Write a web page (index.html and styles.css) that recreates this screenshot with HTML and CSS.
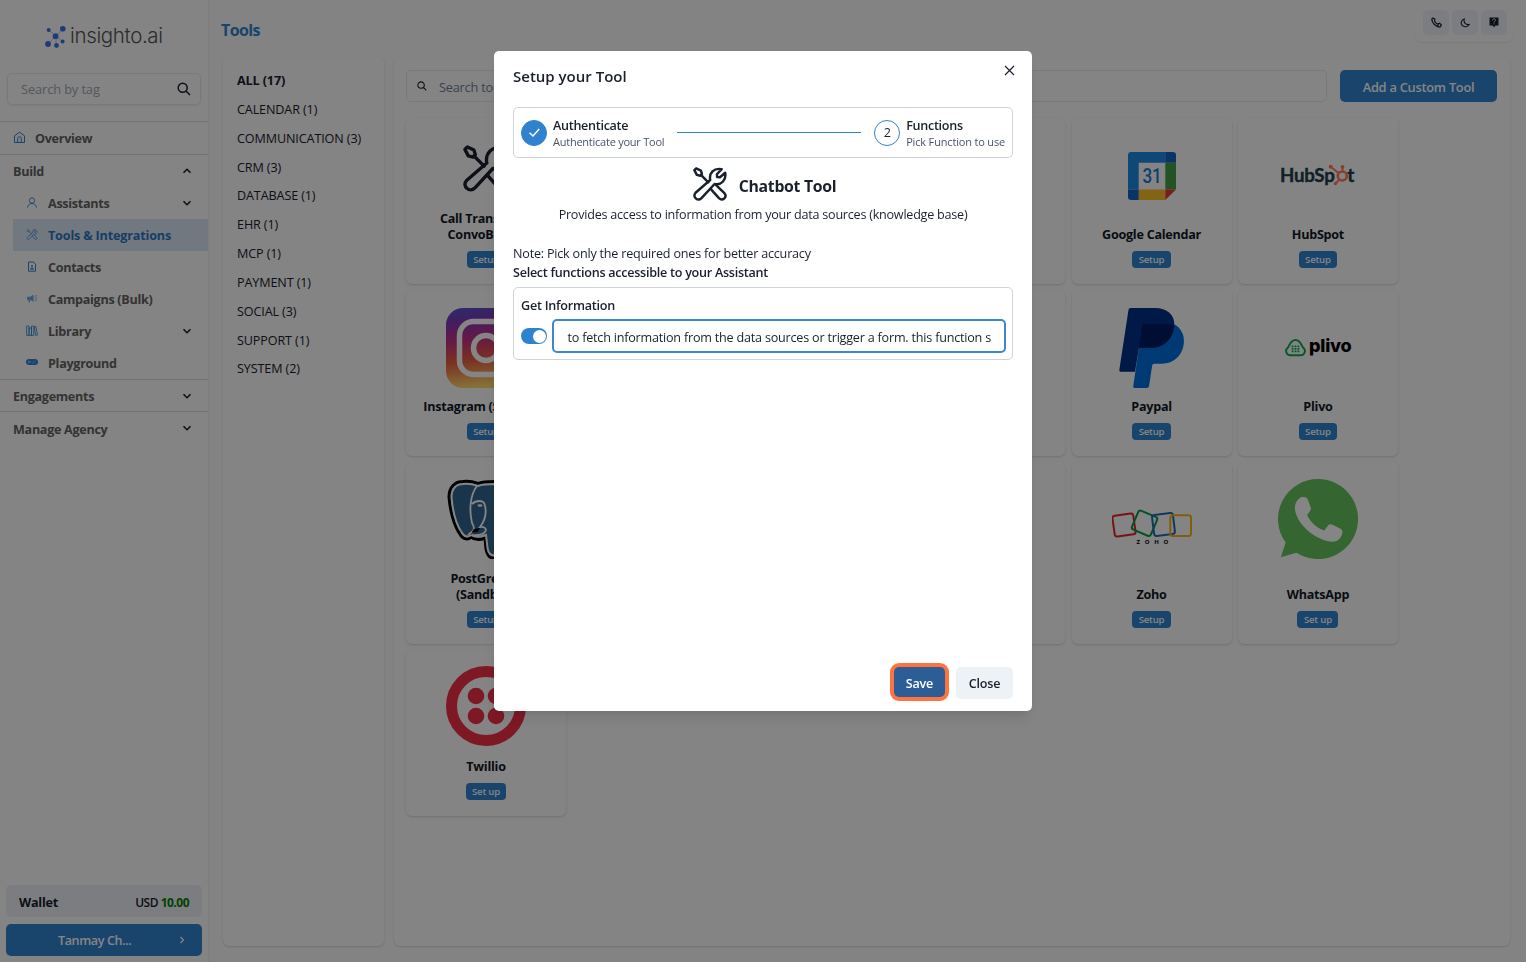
FILE: index.html
```html
<!DOCTYPE html>
<html lang="en">
<head>
<meta charset="utf-8">
<title>Tools</title>
<link rel="stylesheet" href="styles.css">
</head>
<body>
<svg class="defs" width="0" height="0">
  <symbol id="tools" viewBox="0 0 32 32"><g fill="none" stroke="currentColor" stroke-width="2.3" stroke-linejoin="round" stroke-linecap="round"><path d="M1.3 3 3 1.3 7.4 3.4 8.4 6.5 6.8 8.2 3.6 7.4Z"/><path d="M7.5 7.5 14.4 14.4"/><path d="M16.2 12.2C15 5.8 19.5 .6 27 2L22.5 6.8 22.7 9.5 25.4 9.6 30.3 5.4C31.5 12.5 26.5 17.4 20.3 16L8 29.3C4.5 32.8-1 28 2.4 24.2L16.2 12.2"/><path d="M17 21 24.4 29.3C28 32.7 32.8 28 29.3 24.4L22 17.3"/></g></symbol>
  <symbol id="down" viewBox="0 0 10 10"><path d="M1.5 3.2 5 6.7 8.5 3.2" fill="none" stroke="currentColor" stroke-width="1.6"/></symbol>
  <symbol id="up" viewBox="0 0 10 10"><path d="M1.5 6.8 5 3.3 8.5 6.8" fill="none" stroke="currentColor" stroke-width="1.6"/></symbol>
  <symbol id="search" viewBox="0 0 14 14"><path d="M9 9 13 13M5.700 1.200a4.500 4.500 0 1 0 0 9 4.500 4.500 0 0 0 0-9Z" fill="none" stroke="currentColor" stroke-width="1.5"/></symbol>
</svg>
<div class="app">
  <aside class="sidebar">
    <div class="logo">
      <svg width="22" height="24" viewBox="0 0 22 24"><path d="M3.5 5 11 11 18 3.500M11 11 3.500 18.500M11 11V20.500M11 11 17.500 16.500" fill="none" stroke="#9bb5ee" stroke-width=".8"/><g fill="#3b6fe8"><circle cx="3.700" cy="5" r="2"/><circle cx="17.800" cy="3.800" r="2.800"/><circle cx="10.600" cy="11.200" r="2.900"/><circle cx="3" cy="19" r="2.900"/><circle cx="11.500" cy="20.500" r="2.400"/><circle cx="17.600" cy="16.500" r="2"/></g></svg>
      <span>insighto.ai</span>
    </div>
    <div class="tag-search"><span>Search by tag</span><svg width="14" height="14"><use href="#search"/></svg></div>
    <nav>
      <a class="item top"><svg width="13" height="13" viewBox="0 0 13 13"><path d="M1.500 11.500V4.800L6.500 1.200 11.500 4.800V11.500ZM4.700 11.500V7.500a1.800 1.800 0 0 1 3.600 0V11.500" fill="none" stroke="currentColor"/></svg><b>Overview</b></a>
      <div class="item group"><b>Build</b><svg class="chev" width="10" height="10"><use href="#up"/></svg></div>
      <div class="subs">
        <a class="item sub"><svg width="12" height="12" viewBox="0 0 12 12"><g fill="none" stroke="currentColor" stroke-width=".9"><circle cx="6" cy="3.500" r="2.700"/><path d="M1.500 10.500C2 8 3.500 6.500 6 6.500s4 1.500 4.500 4"/></g></svg><b>Assistants</b><svg class="chev" width="10" height="10"><use href="#down"/></svg></a>
        <a class="item sub active"><svg width="12" height="12" viewBox="0 0 12 12"><use href="#tools" x=".5" y="0" width="11" height="11" opacity=".8"/></svg><b>Tools &amp; Integrations</b></a>
        <a class="item sub"><svg width="12" height="12" viewBox="0 0 12 12"><path d="M2.500 1H7.500L9.500 3.200V10.200H2.500Z" fill="none" stroke="currentColor"/><circle cx="6" cy="5.100" r="1" fill="currentColor"/><path d="M4 8.500c0-2.500 4-2.500 4 0Z" fill="currentColor"/></svg><b>Contacts</b></a>
        <a class="item sub"><svg width="12" height="12" viewBox="0 0 12 12"><path d="M1 3.700H4L7.500 1.700V8.700L4 6.700V9.200H2.500V6.700H1Z" fill="currentColor" opacity=".7"/><path d="M9 3.700 10.500 2.200M9.500 5.200H11M9 6.700 10.500 8.200" stroke="currentColor" stroke-width=".8"/></svg><b>Campaigns (Bulk)</b></a>
        <a class="item sub"><svg width="12" height="12" viewBox="0 0 12 12"><path d="M.6 1H3V10.400H.6ZM3 3H5.500V10.400H3ZM5.500 1H7.700V10.400H5.500ZM8.300 1.700 9.800 1.200 11.500 10 9.500 10.400Z" fill="none" stroke="currentColor" stroke-width=".8"/></svg><b>Library</b><svg class="chev" width="10" height="10"><use href="#down"/></svg></a>
        <a class="item sub"><svg width="12" height="12" viewBox="0 0 12 12"><rect y="2" width="12" height="6" rx="3" fill="currentColor"/><circle cx="3.200" cy="5" r="1.300" fill="#91bce4"/><path d="M6.500 6.500 9 3.500" stroke="#91bce4"/></svg><b>Playground</b></a>
      </div>
      <div class="item group line"><b>Engagements</b><svg class="chev" width="10" height="10"><use href="#down"/></svg></div>
      <div class="item group line last"><b>Manage Agency</b><svg class="chev" width="10" height="10"><use href="#down"/></svg></div>
    </nav>
    <div class="wallet"><b>Wallet</b><span>USD <b>10.00</b></span></div>
    <div class="account"><span>Tanmay Ch...</span><svg width="8" height="8" viewBox="0 0 8 8"><path d="M2.500 1 5.500 4 2.500 7" fill="none" stroke="currentColor" stroke-width="1.200"/></svg></div>
  </aside>
  <div class="page">
    <header>
      <h1>Tools</h1>
      <div class="actions">
        <span><svg width="11" height="11" viewBox="0 0 12 12"><path d="M2 1 4.300 2.300 3.800 4.300C4.500 5.900 5.600 7.200 7.200 7.800L9.500 6.800 11.300 9 9.700 11C5.500 10.800 1 6.500.8 2.300ZM8 8.200 7.500 10" fill="none" stroke="currentColor" stroke-width="1.300"/></svg></span>
        <span><svg width="10" height="10" viewBox="0 0 10 10"><path d="M4.300 1C1.500 1.800.3 5 2 7.200S7.500 9.500 9.200 6.500C6 7.300 3.200 4.500 4.300 1Z" fill="none" stroke="currentColor" stroke-width="1.100"/></svg></span>
        <span><svg width="10" height="11" viewBox="0 0 10 11"><path d="M.5.500h9v8H6.500L5 10.200 3.500 8.500h-3Z" fill="currentColor"/><path d="M3.500 3.400C3.500 1.300 6.700 1.500 6.500 3.400 6.400 4.300 5 4.400 5 5.500M5 6.400V7.400" fill="none" stroke="#e8ecf4" stroke-width=".9"/></svg></span>
      </div>
    </header>
    <div class="columns">
      <ul class="categories">
        <li class="all">ALL (17)</li><li>CALENDAR (1)</li><li>COMMUNICATION (3)</li><li>CRM (3)</li><li>DATABASE (1)</li><li>EHR (1)</li><li>MCP (1)</li><li>PAYMENT (1)</li><li>SOCIAL (3)</li><li>SUPPORT (1)</li><li>SYSTEM (2)</li>
      </ul>
      <main>
        <div class="bar">
          <div class="tool-search"><svg width="10" height="10"><use href="#search"/></svg><span>Search tools</span></div>
          <div class="add">Add a Custom Tool</div>
        </div>
        <div class="grid">
          <div class="card call"><svg width="47" height="47"><use href="#tools"/></svg><div class="name">Call Transfer to<br>ConvoBridge</div><i>Setup</i></div>
          <div class="card"></div><div class="card"></div><div class="card"></div>
          <div class="card"><svg width="80" height="80" viewBox="0 0 80 80"><path d="M19 16H53.500V26.700H26.700V53.500H16V19Q16 16 19 16Z" fill="#1e88e5"/><path d="M53.300 16H61Q64 16 64 19V26.700H53.300Z" fill="#1565c0"/><path d="M53.300 26.700H64V53.500H53.300Z" fill="#43a047"/><path d="M26.700 53.500H53.300V64H26.700Z" fill="#fbc02d"/><path d="M16 53.500H26.700V64H19Q16 64 16 61Z" fill="#1565c0"/><path d="M53.300 53.500H64L53.300 64Z" fill="#e53935"/><text x="40" y="47" text-anchor="middle" font-family="Roboto" font-size="20" font-weight="500" textLength="19" lengthAdjust="spacingAndGlyphs" fill="#1e7ad6">31</text></svg><div class="name">Google Calendar</div><i>Setup</i></div>
          <div class="card"><svg width="80" height="80" viewBox="0 0 80 80"><g font-family="Lato" font-weight="700" font-size="19" fill="#213d4c" stroke="#213d4c" stroke-width=".4"><text x="2" y="45.800" textLength="54.500" lengthAdjust="spacingAndGlyphs">HubSp</text><text x="69.300" y="45.800">t</text></g><g fill="none" stroke="#ff7a59" stroke-width="1.800"><circle cx="64.300" cy="40" r="4.500" stroke-width="2.600"/><path d="M64.500 35V31M60.500 37 53 31M61 44 57.500 47.500"/></g><g fill="#ff7a59"><circle cx="52.700" cy="30.700" r="2"/><circle cx="64.500" cy="31" r="1.900"/><circle cx="57.500" cy="47.500" r="1.700"/></g></svg><div class="name">HubSpot</div><i>Setup</i></div>

          <div class="card"><svg width="80" height="80" viewBox="0 0 80 80"><defs><linearGradient id="ig" x2=".12" y2="1"><stop stop-color="#4e57cf"/><stop offset=".18" stop-color="#7f38bb"/><stop offset=".43" stop-color="#c82f84"/><stop offset=".68" stop-color="#e85f40"/><stop offset="1" stop-color="#ffd66c"/></linearGradient></defs><rect width="80" height="80" rx="17" fill="url(#ig)"/><g fill="none" stroke="#fff" stroke-width="5.500"><rect x="13.500" y="13.500" width="53" height="53" rx="14"/><circle cx="40" cy="40" r="12.500"/></g></svg><div class="name">Instagram (Sandbox)</div><i>Setup</i></div>
          <div class="card"></div><div class="card"></div><div class="card"></div>
          <div class="card"><svg width="80" height="80" viewBox="0 0 80 80"><path d="M27 39.700 30.300 18Q30.700 16.300 32.500 16.300H62.300C69 20 72.500 27 71.900 34.500 71 47 62 55.700 50 55.700H42Q40.500 55.700 40.200 57.200L37 78.200Q36.700 80 35 80H22.500Q21 80 21.200 78.200Z" fill="#0070e0"/><path d="M16.500 1.800Q16.800 0 18.500 0H43C55 0 63 7 62.300 17.500 61.500 30 52 39.700 40 39.700H27L23 63.700H8.700Q7 63.700 7.300 62Z" fill="#003087"/><path d="M27 39.700 30.300 18Q30.700 16.300 32.500 16.300H55Q60 16.300 62.300 17.700C61.500 30 52 39.700 40 39.700Z" fill="#001c64"/></svg><div class="name">Paypal</div><i>Setup</i></div>
          <div class="card"><svg width="80" height="80" viewBox="0 0 80 80"><path d="M12.500 47.300H22.500C27 47.300 28.500 42 25 39.500 23.500 37.500 22.500 32 17.500 32S11.500 37.500 10 39.500C6.500 42 8 47.300 12.500 47.300Z" fill="none" stroke="#0fa84f" stroke-width="1.900"/><path d="M14.600 37.500V44.500M17.500 37.500V44.500M20.400 37.500V44.500" stroke="#0fa84f" stroke-width="1.900" stroke-dasharray="1.700 .8"/><text x="31" y="44.200" font-family="Inter" font-weight="800" font-size="18" textLength="42.500" lengthAdjust="spacingAndGlyphs">plivo</text></svg><div class="name">Plivo</div><i>Setup</i></div>

          <div class="card r3"><svg width="80" height="80" viewBox="0 0 80 80"><path d="M3 18C3 8 9 2.500 17 2.500 23 1.500 28 3 32 4.500 36 2.500 42 2.500 50 2.500L65 4 77 15 65 60 55 79H49C43 80 41 75 40 70L39 59C34 61 28 61 25 58 23 61 17 61 14 55 8 47 4 31 3 18Z" fill="#336791" stroke="#000" stroke-width="3"/><path d="M5.500 18C5.500 10 10 5 17 5 23 4 28 5.500 32 7 36 5 42 5 50 5L65 6M25 56C22 58.500 18 58 15.500 53 10 45 6.500 30 5.500 18M25 56C29 58.500 35 58 40 56L41.500 69C42.500 76 46 77 50 76.500" fill="none" stroke="#fff" stroke-width="2"/><path d="M31 7C24 16 23 31 26 44 28 47 29 49 27 52L22 56M26 25C30 21 37 21 38.500 25 42 36 37 44 34 48 39 47 42 51 38 54 34 57 28 56 26 56" fill="none" stroke="#fff" stroke-width="1.800"/><path d="M28 50 34 49 31.500 53 25.500 53.500Z"/><ellipse cx="34" cy="26.500" rx="2.500" ry="1.300" fill="#fff"/></svg><div class="name">PostGreSQL<br>(Sandbox)</div><i>Setup</i></div>
          <div class="card"></div><div class="card"></div><div class="card"></div>
          <div class="card r3"><svg width="80" height="80" viewBox="0 0 80 80"><g fill="none" stroke-width="2"><rect x="1.500" y="35.500" width="21" height="21" rx="2.500" transform="rotate(-8 12 46)" stroke="#e42527"/><rect x="22.300" y="34" width="20.500" height="20.500" rx="2.500" transform="rotate(23 32.500 44.300)" stroke="#089949"/><rect x="41" y="35" width="21" height="21" rx="2.500" transform="rotate(-7 51.500 45.500)" stroke="#226db4"/><rect x="58.300" y="36.200" width="20.700" height="20.700" rx="2.500" stroke="#f9b21d"/></g><text x="24.500" y="65.200" font-family="Open Sans" font-weight="700" font-size="6" textLength="31.500">ZOHO</text></svg><div class="name">Zoho</div><i>Setup</i></div>
          <div class="card r3"><svg width="80" height="80" viewBox="0 0 80 80"><path d="M40 0A40 40 0 1 1 18.500 73.700L2.800 78.300 7.700 63.600A40 40 0 0 1 40 0Z" fill="#67c15e"/><path d="M17 30C16.500 24 20 19 24 18 28 17.500 29 18.500 30 21L33 29.300C33 31.500 31 33.500 29 36C33 44 39 49 46.300 51.500L50.500 46Q52 44.500 54.500 45.700L62.500 49.700Q65 51 64.300 54C63 60 59 63 53.700 62.700 36 61 18 44 17 30Z" fill="#fff"/></svg><div class="name">WhatsApp</div><i>Set up</i></div>

          <div class="card r4"><svg width="80" height="80" viewBox="-40 -40 80 80"><circle r="34.500" fill="none" stroke="#f22f46" stroke-width="11"/><g fill="#f22f46"><circle cx="-10" cy="-10" r="8.300"/><circle cx="10" cy="-10" r="8.300"/><circle cx="-10" cy="10" r="8.300"/><circle cx="10" cy="10" r="8.300"/></g></svg><div class="name">Twillio</div><i>Set up</i></div>
        </div>
      </main>
    </div>
  </div>
</div>
<div class="overlay">
  <section class="modal">
    <div class="title"><h2>Setup your Tool</h2><svg width="11" height="11" viewBox="0 0 11 11"><path d="M1 1 10 10M10 1 1 10" stroke="currentColor" stroke-width="1.200"/></svg></div>
    <div class="stepper">
      <div class="dot done"><svg width="13" height="13" viewBox="0 0 13 13"><path d="M1.500 6.800 5 10 11.200 3" fill="none" stroke="#fff" stroke-width="1.500"/></svg></div>
      <div class="step"><b>Authenticate</b><span class="s1">Authenticate your Tool</span></div>
      <div class="rule"></div>
      <div class="dot">2</div>
      <div class="step"><b>Functions</b><span class="s2">Pick Function to use</span></div>
    </div>
    <div class="tool-head"><svg width="34" height="34"><use href="#tools"/></svg><h3>Chatbot Tool</h3></div>
    <p class="desc">Provides access to information from your data sources (knowledge base)</p>
    <p class="note">Note: Pick only the required ones for better accuracy</p>
    <p class="select">Select functions accessible to your Assistant</p>
    <div class="function">
      <b>Get Information</b>
      <div class="row"><span class="switch"></span><div class="field"><span>to fetch information from the data sources or trigger a form. this function s</span></div></div>
    </div>
    <footer><span class="save">Save</span><span class="close">Close</span></footer>
  </section>
</div>
</body>
</html>
```
FILE: styles.css
```css
* { box-sizing: border-box; }
body { margin: 0; background: #fff; color: #1a202c; font: 12.6px/19px "Open Sans", "Noto Sans", sans-serif; letter-spacing: -.24px; overflow: hidden; }
svg { display: block; flex: none; }
.defs { position: absolute; }
b { font-weight: 600; }
h1, h2, h3, p, ul { margin: 0; padding: 0; }
.app { display: flex; height: 962px; background: #fcfcfc; }

.sidebar { width: 209px; border-right: 1px solid #f0f0f2; display: flex; flex-direction: column; background: #fdfdfd; box-shadow: 0 0 3px rgba(0,0,0,.06); }
.logo { display: flex; height: 73px; padding: 0 0 0 45px; align-items: center; gap: 3px; font: 300 20.5px/24px Inter, sans-serif; color: #555; letter-spacing: -.35px; }
.logo span { margin-top: -2px; }
.tag-search { margin: 0 7px; height: 32px; flex: none; border: 1px solid #e2e8f0; border-radius: 5px; display: flex; align-items: center; justify-content: space-between; padding: 0 9px 0 13px; box-shadow: 0 1px 2px rgba(0,0,0,.05); color: #1a202c; }
.tag-search span { color: #a0a8b5; font-size: 12.8px; letter-spacing: -.1px; padding-top: 1px; }
nav { margin-top: 16px; flex: 1; color: #636363; }
.item { height: 32px; display: flex; align-items: center; }
.item b { font-weight: 700; letter-spacing: -.3px; }
.item > svg:first-child { color: #3182ce; }
.top { height: 34px; border-top: 1px solid #e0e0e3; border-bottom: 1px solid #dcdcdf; padding-left: 13px; gap: 9px; }
.top svg { margin-top: -1px; }
.group { padding-left: 13px; }
.line { border-top: 1px solid #dcdcdf; height: 32px; }
.line b { padding-top: 1px; }
.last b { padding-top: 3px; }
.sub { margin-left: 13px; padding-left: 13px; gap: 10px; }
.item .chev { color: #1a202c; margin-left: auto; margin-right: 16px; }
.sub.active { background: #dbe7f5; }
.sub.active b { color: #2b77c0; letter-spacing: -.17px; }
.wallet, .account { height: 32px; margin: 0 6px 7px; border-radius: 5px; display: flex; align-items: center; justify-content: space-between; padding: 0 13px; flex: none; }
.wallet { background: #edf0f8; padding-top: 2px; }
.wallet > b { font-weight: 700; }
.wallet span { font-size: 12px; font-weight: 600; letter-spacing: -.5px; }
.wallet span b { color: green; font-weight: 700; }
.account { background: #3182ce; color: #fff; font-weight: 600; padding: 0 16px 0 52px; margin-bottom: 6px; letter-spacing: -.4px; }

.page { flex: 1; min-width: 0; }
header { height: 57px; display: flex; justify-content: space-between; padding: 0 13px 0 12px; }
h1 { font-size: 16px; line-height: 60px; color: #3182ce; font-weight: 700; letter-spacing: -.6px; }
.actions { height: 42px; padding: 10px 6px 7px 8px; display: flex; gap: 3px; border-radius: 0 0 6px 6px; box-shadow: 0 1px 2px rgba(0,0,0,.08); }
.actions span { width: 26px; height: 25px; background: #edf0f6; border-radius: 5px; display: grid; place-items: center; }
.columns { display: flex; gap: 10px; padding: 0 16px 0 14px; }
.categories, main { height: 889px; border-radius: 6px; background: #fdfdfd; box-shadow: 0 1px 3px rgba(0,0,0,.1), 0 1px 2px rgba(0,0,0,.06); }
.categories { width: 161px; padding: 10px 0 0 14px; list-style: none; }
.categories li { height: 28.85px; line-height: 28.85px; white-space: nowrap; letter-spacing: -.12px; }
.categories .all { font-weight: 700; }
main { flex: 1; padding: 13px 13px 0 12px; }
.bar { display: flex; gap: 13px; }
.tool-search { flex: 1; height: 32px; border: 1px solid #e2e8f0; border-radius: 5px; display: flex; align-items: center; gap: 12px; padding-left: 10px; }
.tool-search span { color: #718096; font-size: 12.8px; padding-top: 2px; }
.add { width: 157px; height: 32px; border-radius: 5px; background: #3182ce; color: #fff; font-weight: 600; text-align: center; line-height: 35px; font-size: 12.8px; }
.grid { margin-top: 16px; display: grid; grid-template-columns: repeat(6, 160px); grid-template-rows: 166px 166px 182px 166px; gap: 6px 6.4px; }
.card { border-radius: 6px; background: #fefefe; box-shadow: 0 1px 3px rgba(0,0,0,.1), 0 1px 2px rgba(0,0,0,.06); padding: 18px 0 16px; display: flex; flex-direction: column; align-items: center; }
.call { padding-top: 27px; }
.r3 { padding-top: 17px; }
.r4 { padding-top: 16px; }
.name { margin-top: auto; text-align: center; font-weight: 700; line-height: 16px; color: #111827; letter-spacing: -.26px; white-space: nowrap; }
.card i { margin-top: 8px; font: 600 9.6px/17px "Open Sans", sans-serif; letter-spacing: -.2px; height: 17px; border-radius: 4px; padding: 0 6.5px; background: #3182ce; color: #fff; }

.overlay { position: fixed; inset: 0; background: rgba(0,0,0,.48); padding-top: 51px; }
.modal { width: 538px; height: 660px; margin: 0 auto; background: #fff; border-radius: 5px; box-shadow: 0 10px 15px -3px rgba(0,0,0,.1), 0 4px 6px -2px rgba(0,0,0,.05); padding: 0 19px; display: flex; flex-direction: column; }
.title { display: flex; justify-content: space-between; height: 56px; padding: 14px 0 0; flex: none; }
.title svg { margin-right: -2px; }
h2 { font-size: 15px; line-height: 23px; font-weight: 600; letter-spacing: 0; }
.stepper { height: 51px; flex: none; border: 1px solid #d0d3d8; border-radius: 5px; display: flex; align-items: center; padding: 0 7px; }
.dot { width: 26px; height: 26px; border: 1.5px solid #3182ce; border-radius: 50%; display: grid; place-items: center; flex: none; }
.done { background: #3182ce; }
.step { margin-left: 6px; display: flex; flex-direction: column; white-space: nowrap; }
.step b { line-height: 18px; letter-spacing: -.3px; padding-top: 1px; }
.step span { font-size: 11px; line-height: 14px; color: #4a5568; }
.step .s2 { letter-spacing: -.17px; }
.rule { flex: 1; height: 1px; background: #3182ce; margin: 0 13px; }
.tool-head { display: flex; align-items: center; justify-content: center; gap: 12px; height: 52px; flex: none; padding-left: 3px; }
h3 { font-size: 15.8px; font-weight: 700; letter-spacing: -.3px; padding-top: 4px; }
.desc { text-align: center; line-height: 19px; margin-top: -5px; }
.note { margin-top: 20px; letter-spacing: -.21px; }
.select { font-weight: 600; letter-spacing: -.27px; }
.function { height: 73px; margin-top: 5px; border: 1px solid #d0d3d8; border-radius: 5px; padding: 8px 6px 0 7px; flex: none; }
.function > b { display: block; }
.row { display: flex; align-items: center; gap: 5px; margin-top: 4px; }
.switch { width: 27px; height: 16px; border-radius: 8px; background: #3182ce; display: flex; justify-content: flex-end; padding: 1.5px; }
.switch::after { content: ""; width: 13px; height: 13px; border-radius: 50%; background: #fff; }
.field { flex: 1; height: 34px; border: 2px solid #3c87cf; border-radius: 5px; padding: 0 13px; line-height: 33px; white-space: nowrap; letter-spacing: -.21px; }
footer { margin: auto 0 12px; display: flex; justify-content: flex-end; gap: 11px; }
.save, .close { height: 32px; border-radius: 5px; font-weight: 600; text-align: center; line-height: 34px; }
.save { width: 51px; height: 30px; background: #2c5d96; color: #fff; box-shadow: 0 0 0 4px #ff7340; }
.close { width: 57px; background: #edf2f7; }
```
